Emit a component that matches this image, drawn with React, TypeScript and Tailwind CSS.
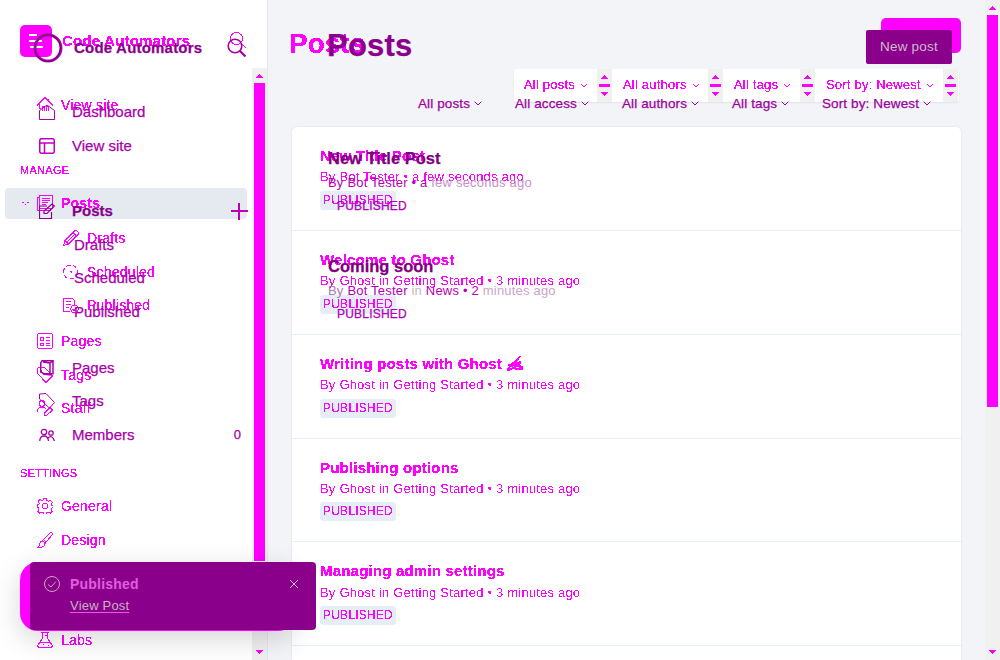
import type { ReactNode } from "react";

const crisp = "[filter:url(#crisp)]";
const crispThin = "[filter:url(#crisp-thin)]";
const heavy = "[-webkit-text-stroke:0.25px_currentColor]";

function Icon({ children, className = "", size = 16 }: { children: ReactNode; className?: string; size?: number }) {
  return (
    <svg width={size} height={size} viewBox="0 0 16 16" fill="none" stroke="currentColor" strokeWidth="1" className={`shrink-0 ${className}`}>
      {children}
    </svg>
  );
}

const house = <path d="M0 8.500 8 .500l8 8M2.500 7v4.500H4M5 13.500v-4h2v4M9 13.500v-4h2v4M11.500 2v2" />;
const postsIcon = <path d="M2.500.500h13v13h-13zM2.500 2.500h-2v13h13v-2M5 3.500h8M5 5.500h8M5 7.500h6M5 9.500h4" />;
const pencil = <path d="M.700 15.300 2 10.500 11.500 1q1.300-1 2.600 0l.900.900q1 1.300 0 2.600L5.500 14zM2 10.500 5.500 14M10 2.500l3.500 3.500M4 12.200l7.500-7.500" />;
const clock = (
  <>
    <circle cx="7.500" cy="8" r="7" strokeDasharray="5 2" />
    <path d="M6.500 7.500h2v1.500" />
  </>
);
const publishedIcon = (
  <>
    <path d="M7 14.500H.500V1.500h9l2 2V8M3 4.500h5M3 7.500h5M3 10.500h3" />
    <circle cx="11.500" cy="12" r="3.700" />
    <path d="m9.500 12 1.500 1.500 2.500-3" />
  </>
);
const pagesIcon = <path d="M1.500.500h13l1 1v13l-1 1h-13l-1-1v-13zM3.500 4.500h3v3h-3zM3.500 10.500h3v2h-3zM9 4.500h4M9 7.500h4M9 10.500h4M9 12.500h4" />;
const tag = (
  <>
    <path d="M.500 1.500v5l8.500 9 6.500-6.500-8-8.500H2z" />
    <circle cx="4" cy="4" r="1" />
  </>
);
const staff = (
  <>
    <circle cx="5" cy="3.500" r="2.800" />
    <path d="M.500 12V9.500Q2 7 5 7q3 0 4 2M7.500 13l5.500-5.500 2.500 2.500-6 5.500h-2z" />
  </>
);
const gear = (
  <>
    <path d="m6.500.500h3l.5 2.200 1.500.7 2-1 1.800 2-1 2 .5 1 1.200.6v1.500l-1.200.6-.6 1.300 1 2-2 1.800-2-1-1.400.6-.5 1.200h-2.600l-.6-1.200-1.500-.6-2 1-1.700-2 1-2-.5-1.300L.500 9V7l1.200-.6.5-1.200-1-2 1.800-1.800 2 1 1.200-.5z" />
    <circle cx="8" cy="8" r="2.800" />
  </>
);
const brush = <path d="m5 9 8-8q2-1 2.500.5 0 1-.5 1.500L8 11.500M5 9q2 0 3 2.500Q8 15.500.500 15.500 2.500 14 2.500 12 3 9.500 5 9zM6.500 7.500l3 2.500" />;
const flask = <path d="M4 .500h8M5.500.500v6L.500 13.500l1 2h13l1-2-5-7v-6M3 10.500h10M8 3.500h2M6 12.500h1M11 12.500v1" />;

function NavRow({ icon, label, className, bold = false }: { icon: ReactNode; label: string; className: string; bold?: boolean }) {
  return (
    <div className={`flex shrink-0 items-center gap-2 ${className}`}>
      <Icon className="[shape-rendering:crispEdges]">{icon}</Icon>
      <span className={`${crisp} text-[14px] leading-5 tracking-[0.2px] ${bold ? "font-bold" : ""}`}>{label}</span>
    </div>
  );
}

function Triangle({ down = false }: { down?: boolean }) {
  return (
    <svg width="7" height="4" viewBox="0 0 7 4" shapeRendering="crispEdges" className={`shrink-0 ${down ? "rotate-180" : ""}`}>
      <path d="M3 0h1v1h1v1h1v1h1v1H0V3h1V2h1V1h1z" fill="#f0f" />
    </svg>
  );
}

function Chevron({ className = "" }: { className?: string }) {
  return (
    <svg width="8" height="5" viewBox="0 0 8 5" fill="none" stroke="currentColor" className={`shrink-0 ${className}`}>
      <path d="m.7.700 3.300 3.300L7.300.700" />
    </svg>
  );
}

const filters = [
  { label: "All posts", width: "w-[99px]" },
  { label: "All authors", width: "w-[111px]" },
  { label: "All tags", width: "w-[92px]" },
  { label: "Sort by: Newest", width: "w-[143px]" },
];

const ghostMeta = "By Ghost in Getting Started • 3 minutes ago";
const posts = [
  { title: "New Title Post", meta: "By Bot Tester • a few seconds ago" },
  { title: "Welcome to Ghost", meta: ghostMeta },
  { title: "Writing posts with Ghost", meta: ghostMeta, hand: true },
  { title: "Publishing options", meta: ghostMeta },
  { title: "Managing admin settings", meta: ghostMeta },
  { title: "", meta: "" },
];

function WritingHand() {
  return (
    <svg width="17" height="16" viewBox="0 0 17 16" shapeRendering="crispEdges" fill="#f0f">
      <path d="M1 9h2l2-2 3-1 4-5h2l-4 6 4-1v2l-2 2 4 1v4h-7l-3-1-3 1-1 1H0v-3l2-1-1-2z" />
      <path d="M3 12h2v1H3zM6 11h1v1H6zM9 12h3v1H9z" fill="#fff" />
    </svg>
  );
}

function Sidebar() {
  return (
    <aside className="flex w-[268px] shrink-0 flex-col border-r border-[#e4e7ee] bg-white text-[#f0f]">
      <div className="flex h-[68px] shrink-0 items-start pl-5">
        <div className="mt-[25px] flex h-8 w-8 shrink-0 flex-col items-start gap-[4px] rounded-[5px] bg-[#f0f] pt-[9px] pl-[9px]">
          <span className="h-[2px] w-[8px] bg-white" />
          <span className="h-[2px] w-[13px] bg-white" />
          <span className="ml-px h-[2px] w-[13px] bg-white" />
        </div>
        <span className={`${crisp} mt-[31px] ml-[10px] w-[160px] text-[15px] leading-5 font-bold tracking-[0.2px] whitespace-nowrap`}>Code Automators</span>
        <Icon className="mt-8 ml-[8px] [shape-rendering:crispEdges]">
          <circle cx="6.500" cy="6.500" r="6" />
          <path d="m11 11 5 5" />
        </Icon>
      </div>
      <div className="flex min-h-0 flex-1">
        <nav className="flex min-w-0 flex-1 flex-col overflow-hidden">
          <NavRow className="mt-[20px] h-[34px] pl-[37px]" icon={house} label="View site" />
          <div className={`${crisp} mt-[38px] h-5 shrink-0 pl-5 text-[11px] leading-5 tracking-[0.3px]`}>MANAGE</div>
          <div className="mt-2 mr-[5px] ml-[5px] flex h-[31px] shrink-0 items-center rounded-[4px] bg-[#e5eaf1] pl-4">
            <svg width="9" height="5" viewBox="0 0 9 5" shapeRendering="crispEdges">
              <path d="M0 0h1v1H0zM8 0h1v1H8zM4 4h1v1H4z" fill="#fff" />
              <path d="M1 1h2v1H1zM6 1h2v1H6zM4 3h1v1H4z" fill="#f0f" />
            </svg>
            <NavRow className="ml-[7px] h-[30px] self-start" icon={postsIcon} label="Posts" bold />
          </div>
          <NavRow className="mt-[2px] h-[34px] pl-[63px]" icon={pencil} label="Drafts" />
          <NavRow className="h-[33px] pl-[63px]" icon={clock} label="Scheduled" />
          <NavRow className="h-[34px] pl-[63px]" icon={publishedIcon} label="Published" />
          <NavRow className="mt-[2px] h-[33px] pl-[37px]" icon={pagesIcon} label="Pages" />
          <NavRow className="mt-px h-[34px] pl-[37px]" icon={tag} label="Tags" />
          <NavRow className="h-[32px] pl-[37px]" icon={staff} label="Staff" />
          <div className={`${crisp} mt-[39px] h-5 shrink-0 pl-5 text-[11px] leading-5 tracking-[0.3px]`}>SETTINGS</div>
          <NavRow className="mt-[7px] h-[32px] pl-[37px]" icon={gear} label="General" />
          <NavRow className="mt-px h-[34px] pl-[37px]" icon={brush} label="Design" />
          <NavRow className="mt-[67px] h-[32px] pl-[37px]" icon={flask} label="Labs" />
        </nav>
        <div className="flex w-[15px] flex-col items-center bg-[#f0f0f0] pt-[6px] pb-[6px]">
          <Triangle />
          <div className="mt-[5px] mb-[89px] w-[11px] flex-1 bg-[#f0f]" />
          <Triangle down />
        </div>
      </div>
    </aside>
  );
}

function Main() {
  return (
    <main className="flex min-w-0 flex-1 flex-col overflow-hidden bg-[#f2f4f8] pl-6 text-[#f0f]">
      <div className="flex h-[69px] shrink-0 items-start justify-between pr-6">
        <h1 className={`${crisp} mt-[28px] -ml-[3px] text-[28px] leading-8 font-bold`}>Posts</h1>
        <div className="mt-[18px] h-[35px] w-20 rounded-[5px] bg-[#f0f]" />
      </div>
      <div className="mr-[26px] flex h-[33px] shrink-0 self-end rounded-[3px] bg-white shadow-[0_1px_2px_rgba(0,0,0,0.07)]">
        {filters.map((f) => (
          <div key={f.label} className={`flex shrink-0 ${f.width}`}>
            <div className="flex flex-1 items-center pb-px pl-[10px]">
              <span className={`${crisp} text-[13px] leading-5 tracking-[0.2px] whitespace-nowrap`}>{f.label}</span>
              <Chevron className="ml-[5px] [shape-rendering:crispEdges]" />
            </div>
            <div className="mr-px flex w-[15px] flex-col items-center bg-[#f0f0f0] pt-[6px]">
              <Triangle />
              <div className="my-[5px] h-[3px] w-[11px] bg-[#f0f]" />
              <Triangle down />
            </div>
          </div>
        ))}
      </div>
      <section className="mt-[25px] mr-6 min-h-0 flex-1 overflow-hidden rounded-t-[5px] bg-white shadow-[0_0_2px_rgba(0,0,0,0.12)]">
        {posts.map((p, i) => (
          <article key={i} className="h-[103.850px] border-b border-[#e5eef5] pt-[19px] pl-7">
            {p.title && (
              <>
                <h2 className="flex h-[19px] items-center gap-[5px]">
                  <span className={`${crisp} text-[15px] leading-[19px] font-bold tracking-[0.2px]`}>{p.title}</span>
                  {p.hand && <WritingHand />}
                </h2>
                <p className={`${crispThin} mt-[1.200px] h-[21px] text-[13px] leading-[21px] tracking-[0.2px]`}>{p.meta}</p>
                <div className="mt-[3.700px] h-[19px] w-[76px] rounded-[3px] bg-[#e5eef5] pl-[3px]">
                  <span className={`${crisp} block text-[12px] leading-[18px] tracking-[0.2px]`}>PUBLISHED</span>
                </div>
              </>
            )}
          </article>
        ))}
      </section>
    </main>
  );
}

function OverlayRow({ icon, label, className, children }: { icon?: ReactNode; label: string; className: string; children?: ReactNode }) {
  return (
    <div className={`flex shrink-0 items-center pl-[39px] text-[15px] leading-5 ${className}`}>
      <span className="w-[33px] shrink-0">{icon && <Icon>{icon}</Icon>}</span>
      <span className={`${heavy} flex-1`}>{label}</span>
      {children}
    </div>
  );
}

function OverlaySidebar() {
  return (
    <div className="flex w-[268px] shrink-0 flex-col text-[#a800a8]">
      <div className="flex h-[95px] shrink-0 items-start pl-[33px] text-[#8b008b]">
        <svg width="30" height="30" viewBox="0 0 30 30" fill="none" className="mt-[33px] shrink-0">
          <circle cx="15" cy="15" r="13" stroke="#b000b0" strokeWidth="3" />
          <ellipse cx="14.500" cy="15" rx="13" ry="13.500" stroke="#68006d" />
          <path d="M1.500 18Q0 4 14 1.500" stroke="#555" />
        </svg>
        <span className={`${heavy} mt-[38px] ml-[11px] w-[153px] text-[15px] leading-5 font-bold tracking-[0.2px] whitespace-nowrap`}>Code Automators</span>
        <svg width="19" height="19" viewBox="0 0 19 19" fill="none" stroke="#a000a0" className="mt-[38px]">
          <circle cx="8" cy="8" r="6.800" strokeWidth="1.600" />
          <path d="m12.500 12.500 6 6" strokeWidth="2.200" />
        </svg>
      </div>
      <OverlayRow className="h-[34px]" icon={<path d="M.500 6.500v9h15v-9L8 1z" />} label="Dashboard" />
      <OverlayRow className="h-[34px]" icon={<path stroke="#c000c0" strokeWidth="1.500" d="M2 .750h12l1.250 1.250v12L14 15.250H2L.750 14V2zM.750 5h14.500M5.500 5v10" />} label="View site" />
      <OverlayRow
        className="mt-[31px] h-[33px] pr-[20px] font-bold text-[#8b008b]"
        icon={<path d="M8 3H.500v12.500h12V9M5 8l8-7 2.500 2L8 10.500H5z" strokeWidth="1.200" />}
        label="Posts"
      >
        <svg width="17" height="17" viewBox="0 0 17 17" stroke="#b800b8" strokeWidth="2" className="relative top-px">
          <path d="M8 0v17M0 8h17" />
        </svg>
      </OverlayRow>
      <OverlayRow className="mt-px h-[34px] pl-[41px]" label="Drafts" />
      <OverlayRow className="h-[32px] pl-[41px]" label="Scheduled" />
      <OverlayRow className="mt-px h-[34px] pl-[41px]" label="Published" />
      <OverlayRow className="mt-[22px] h-[33px]" icon={<path strokeWidth="1.500" d="M3 .750h11v13H5L1.750 12V3zM4 2l7 1v12l-7-1M11 3l3-2" />} label="Pages" />
      <OverlayRow className="h-[33px]" icon={<path d="M.500 1 7 .500l8.500 9-5 5.500-10-9z" />} label="Tags" />
      <OverlayRow
        className="h-[35px] pr-[27px]"
        icon={
          <>
            <circle cx="5" cy="5" r="2.700" strokeWidth="1.300" />
            <circle cx="12" cy="6" r="2.200" strokeWidth="1.300" />
            <path strokeWidth="1.300" d="M.750 14Q1 9 5 9t4.500 5M9 11q4-4 6.500 3" />
          </>
        }
        label="Members"
      >
        <span className={`${heavy} text-[13px]`}>0</span>
      </OverlayRow>
    </div>
  );
}

const overlayFilters = [
  { label: "All posts", width: "w-[97px]" },
  { label: "All access", width: "w-[107px]" },
  { label: "All authors", width: "w-[110px]" },
  { label: "All tags", width: "w-[90px]" },
  { label: "Sort by: Newest", width: "w-[130px]" },
];

function OverlayPost({ title, children, className }: { title: string; children: ReactNode; className: string }) {
  return (
    <div className={`pl-[60px] ${className}`}>
      <h2 className={`${heavy} h-5 text-[16.500px] leading-5 font-bold text-[#800080]`}>{title}</h2>
      <p className="mt-[5px] h-5 text-[13px] leading-5 tracking-[0.2px] text-[#b600b6]">{children}</p>
      <p className={`${heavy} mt-[3px] h-5 pl-[9px] text-[12px] leading-5 tracking-[0.2px] text-[#b000b8]`}>PUBLISHED</p>
    </div>
  );
}

function OverlayMain() {
  return (
    <div className="flex w-[717px] flex-col">
      <div className="flex h-[94px] shrink-0 items-start justify-between pr-[33px] pl-[59px]">
        <h1 className={`${heavy} mt-[28px] text-[31px] leading-9 font-bold tracking-[0.2px] text-[#8b008b]`}>Posts</h1>
        <div className="mt-[30px] flex h-[34px] w-[86px] items-center justify-center rounded-[2px] bg-[#8b008b] text-[13.500px] tracking-[0.2px] text-[#ccbccc]">New post</div>
      </div>
      <div className="flex h-5 shrink-0 items-center pl-[150px] text-[13.500px] tracking-[0.120px] text-[#a000a0]">
        {overlayFilters.map((f) => (
          <div key={f.label} className={`flex shrink-0 items-center ${f.width}`}>
            <span className={`${heavy} leading-5 whitespace-nowrap`}>{f.label}</span>
            <Chevron className="-mt-px ml-[4px]" />
          </div>
        ))}
      </div>
      <OverlayPost className="mt-[34px]" title="New Title Post">
        By Bot Tester • a <span className="text-[#c890c8]">few seconds ago</span>
      </OverlayPost>
      <OverlayPost className="mt-[40px]" title="Coming soon">
        <span className="text-[#b078b0]">By</span> Bot Tester <span className="text-[#bbb]">in</span> News • 2 <span className="text-[#cba4cb]">minutes ago</span>
      </OverlayPost>
    </div>
  );
}

function Toast() {
  return (
    <div className="absolute top-[562px] left-5 h-[69px] w-[276px] rounded-[18px] bg-[#f0f] pl-[10px] shadow-[0_8px_28px_rgba(0,0,0,0.16)]">
      <div className="flex h-[68px] w-[286px] items-start rounded-[4px] bg-[#8b008b] pt-3 pl-[14px]">
        <Icon className="mt-[2px] text-[#c5aabf]">
          <circle cx="8" cy="8" r="7.500" />
          <path d="m4 8.500 3 2.500 5-5.500" />
        </Icon>
        <div className="ml-[10px] flex w-[220px] flex-col items-start">
          <span className="h-[21px] text-[14px] leading-5 font-bold tracking-[0.2px] text-[#e25de0]">Published</span>
          <span className="mt-[3px] text-[13px] leading-[15px] tracking-[0.2px] text-[#c5b4c2] underline decoration-[#f050f0] decoration-1 underline-offset-2">View Post</span>
        </div>
        <svg width="8" height="8" viewBox="0 0 8 8" stroke="#d5b5d5" className="mt-[6px]">
          <path d="m0 0 8 8M8 0 0 8" />
        </svg>
      </div>
    </div>
  );
}

export default function App() {
  return (
    <div className="relative flex h-[660px] w-[1000px] overflow-hidden bg-white font-['Liberation_Sans',Arial,sans-serif]">
      <svg width="0" height="0" className="absolute">
        <filter id="crisp" x="-5%" y="-5%" width="110%" height="110%">
          <feComponentTransfer>
            <feFuncA type="discrete" tableValues="0 1 1" />
          </feComponentTransfer>
        </filter>
        <filter id="crisp-thin" x="-5%" y="-5%" width="110%" height="110%">
          <feComponentTransfer>
            <feFuncA type="discrete" tableValues="0 1" />
          </feComponentTransfer>
        </filter>
      </svg>
      <Sidebar />
      <Main />
      <div className="flex w-[15px] shrink-0 flex-col items-center bg-[#f0f0f0] py-[6px]">
        <Triangle />
        <div className="mt-[5px] h-[392px] w-[11px] bg-[#f0f]" />
        <div className="flex-1" />
        <Triangle down />
      </div>
      <div className="pointer-events-none absolute inset-0 flex">
        <OverlaySidebar />
        <OverlayMain />
      </div>
      <Toast />
    </div>
  );
}
